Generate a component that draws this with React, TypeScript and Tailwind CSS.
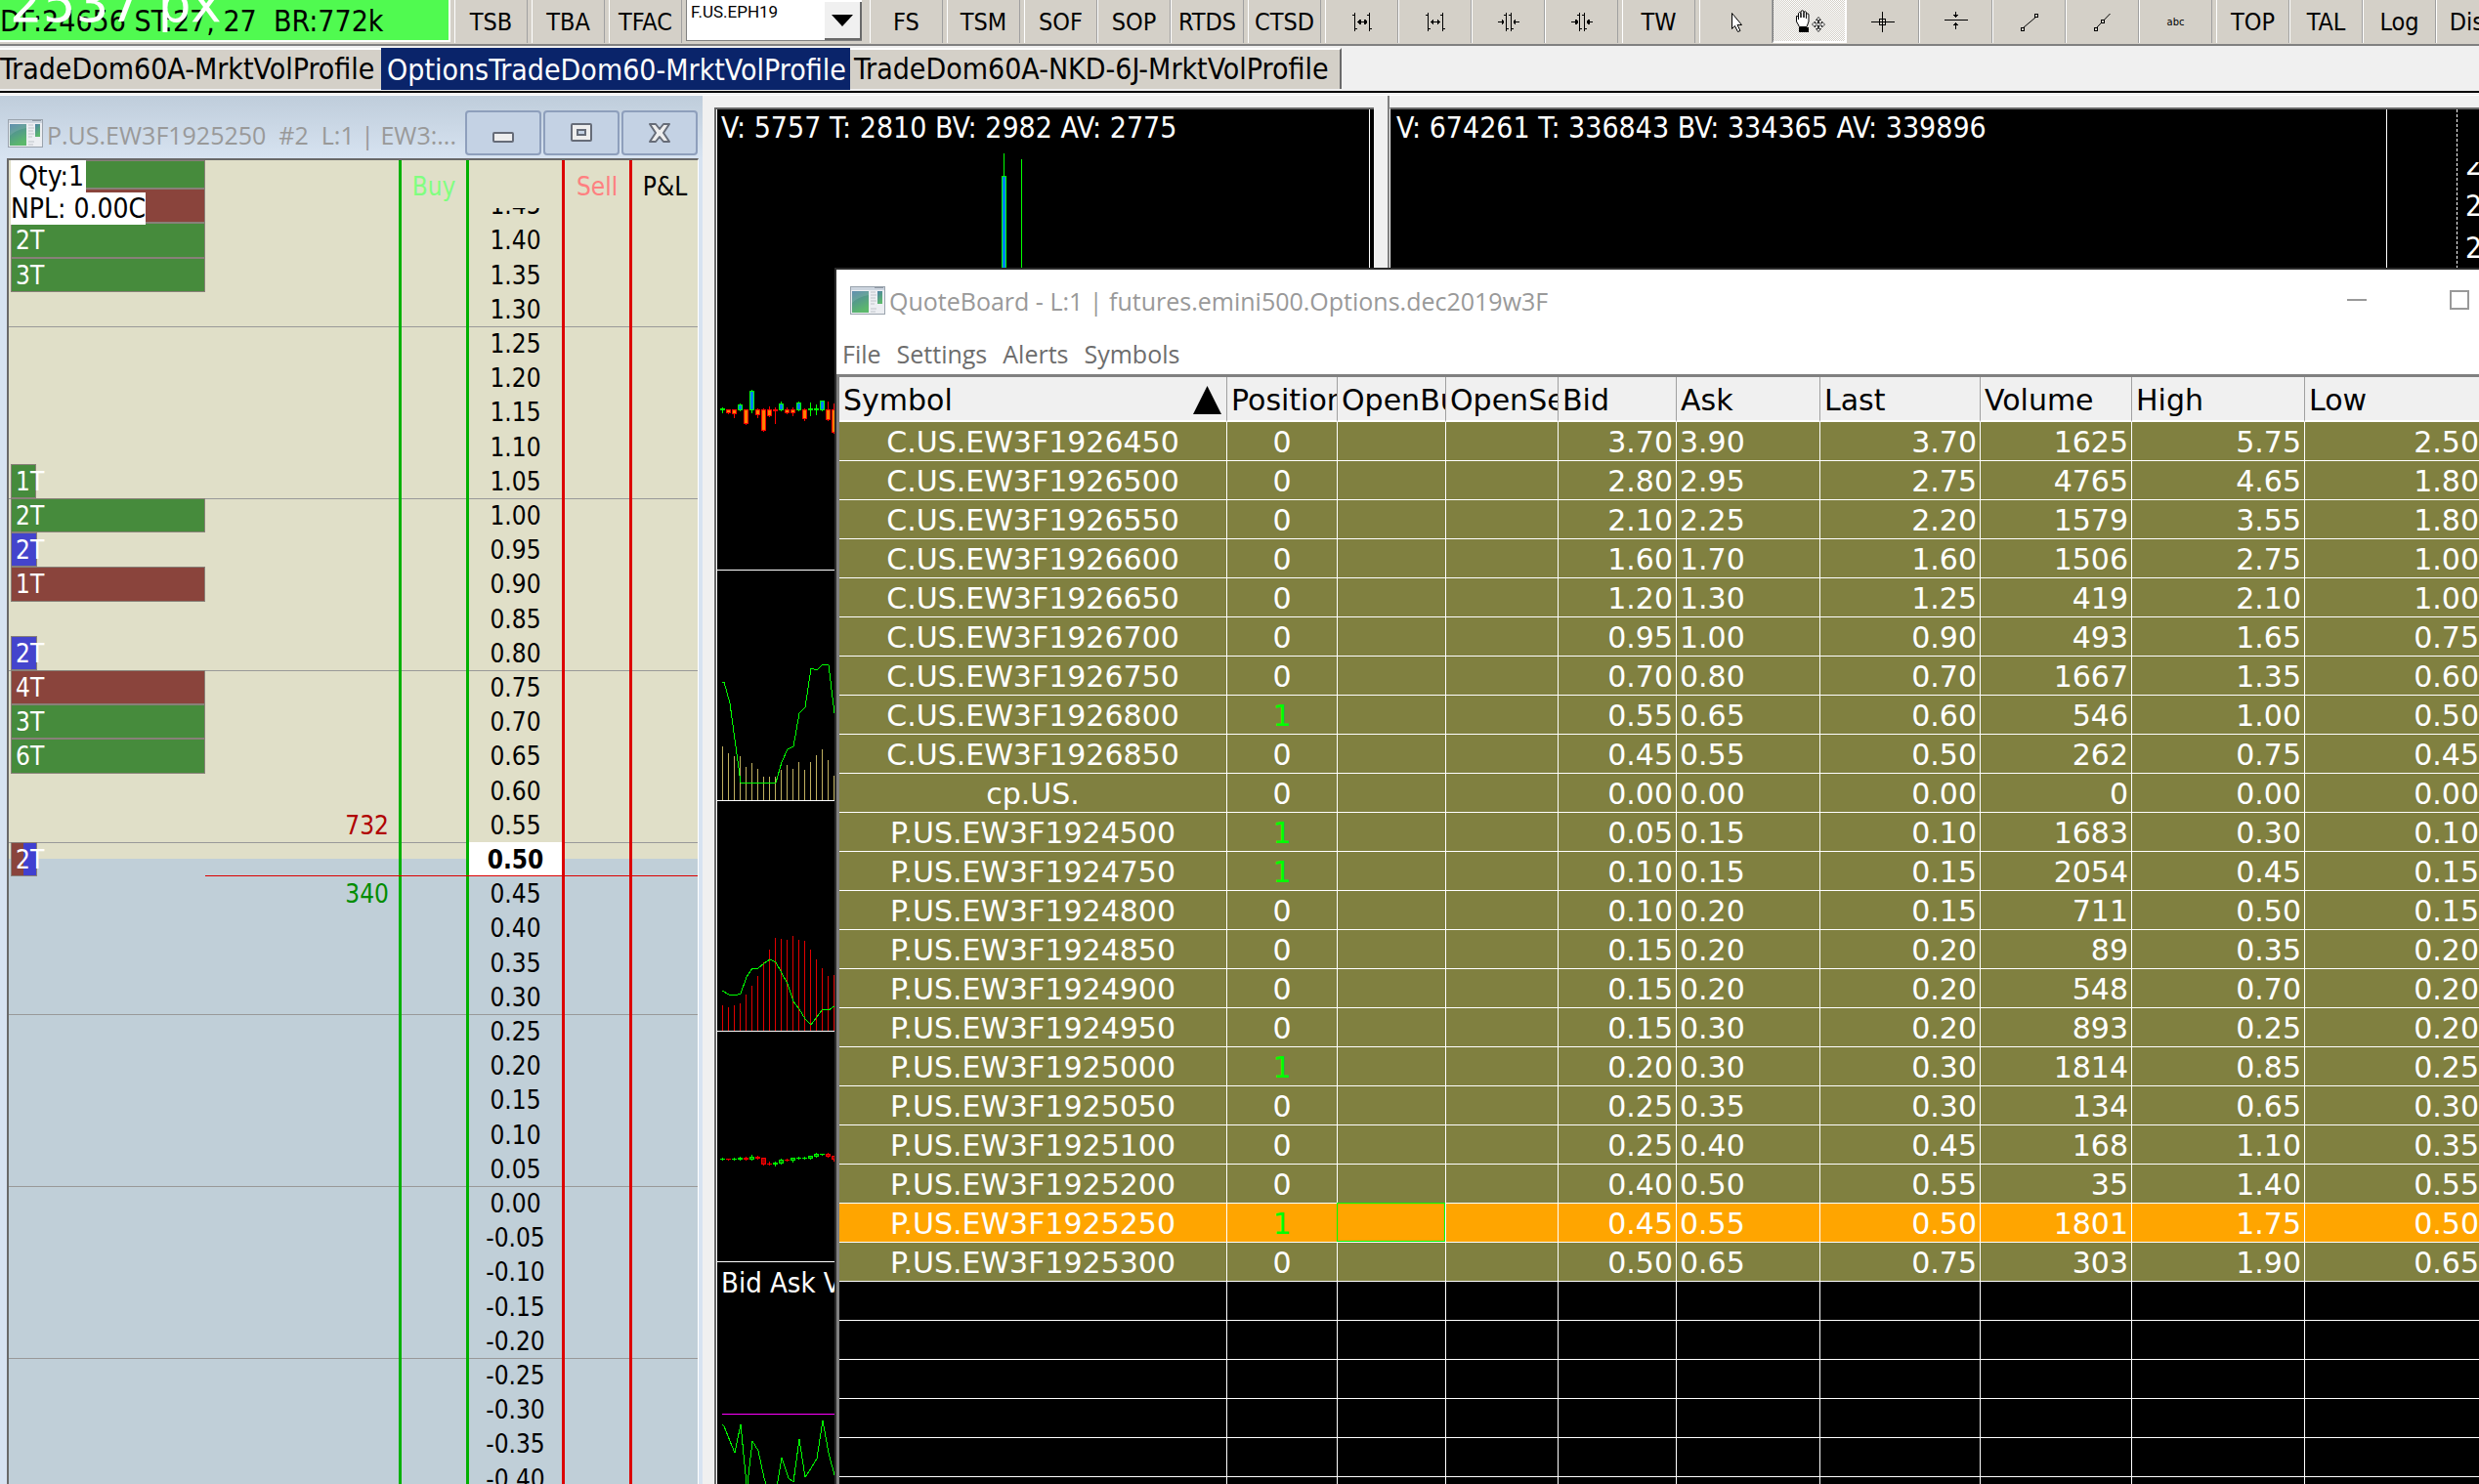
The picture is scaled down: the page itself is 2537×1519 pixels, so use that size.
import type { ReactNode } from "react";

type Candle = {
  kind: "up" | "down" | "doji";
  top: number;
  bottom: number;
  high: number;
  low: number;
};

const menuItems = ["File", "Settings", "Alerts", "Symbols"];

const quotes = [
  ["C.US.EW3F1926450", "0", "3.70", "3.90", "3.70", "1625", "5.75", "2.50"],
  ["C.US.EW3F1926500", "0", "2.80", "2.95", "2.75", "4765", "4.65", "1.80"],
  ["C.US.EW3F1926550", "0", "2.10", "2.25", "2.20", "1579", "3.55", "1.80"],
  ["C.US.EW3F1926600", "0", "1.60", "1.70", "1.60", "1506", "2.75", "1.00"],
  ["C.US.EW3F1926650", "0", "1.20", "1.30", "1.25", "419", "2.10", "1.00"],
  ["C.US.EW3F1926700", "0", "0.95", "1.00", "0.90", "493", "1.65", "0.75"],
  ["C.US.EW3F1926750", "0", "0.70", "0.80", "0.70", "1667", "1.35", "0.60"],
  ["C.US.EW3F1926800", "1", "0.55", "0.65", "0.60", "546", "1.00", "0.50"],
  ["C.US.EW3F1926850", "0", "0.45", "0.55", "0.50", "262", "0.75", "0.45"],
  ["cp.US.", "0", "0.00", "0.00", "0.00", "0", "0.00", "0.00"],
  ["P.US.EW3F1924500", "1", "0.05", "0.15", "0.10", "1683", "0.30", "0.10"],
  ["P.US.EW3F1924750", "1", "0.10", "0.15", "0.15", "2054", "0.45", "0.15"],
  ["P.US.EW3F1924800", "0", "0.10", "0.20", "0.15", "711", "0.50", "0.15"],
  ["P.US.EW3F1924850", "0", "0.15", "0.20", "0.20", "89", "0.35", "0.20"],
  ["P.US.EW3F1924900", "0", "0.15", "0.20", "0.20", "548", "0.70", "0.20"],
  ["P.US.EW3F1924950", "0", "0.15", "0.30", "0.20", "893", "0.25", "0.20"],
  ["P.US.EW3F1925000", "1", "0.20", "0.30", "0.30", "1814", "0.85", "0.25"],
  ["P.US.EW3F1925050", "0", "0.25", "0.35", "0.30", "134", "0.65", "0.30"],
  ["P.US.EW3F1925100", "0", "0.25", "0.40", "0.45", "168", "1.10", "0.35"],
  ["P.US.EW3F1925200", "0", "0.40", "0.50", "0.55", "35", "1.40", "0.55"],
  ["P.US.EW3F1925250", "1", "0.45", "0.55", "0.50", "1801", "1.75", "0.50"],
  ["P.US.EW3F1925300", "0", "0.50", "0.65", "0.75", "303", "1.90", "0.65"],
];

const selectedSymbol = "P.US.EW3F1925250";

const columns = [
  { title: "Symbol", width: "w-[397px]" },
  { title: "Position", width: "w-[113px]" },
  { title: "OpenBuy", width: "w-[111px]" },
  { title: "OpenSell", width: "w-[115px]" },
  { title: "Bid", width: "w-[121px]" },
  { title: "Ask", width: "w-[147px]" },
  { title: "Last", width: "w-[164px]" },
  { title: "Volume", width: "w-[155px]" },
  { title: "High", width: "w-[177px]" },
  { title: "Low", width: "" },
];

const ladderPrices = [
  "1.40", "1.35", "1.30", "1.25", "1.20", "1.15", "1.10", "1.05", "1.00",
  "0.95", "0.90", "0.85", "0.80", "0.75", "0.70", "0.65", "0.60", "0.55",
  "0.50", "0.45", "0.40", "0.35", "0.30", "0.25", "0.20", "0.15", "0.10",
  "0.05", "0.00", "-0.05", "-0.10", "-0.15", "-0.20", "-0.25", "-0.30",
  "-0.35", "-0.40",
];

const green = "bg-[#468b3c]";
const brown = "bg-[#8a443c]";
const blue = "bg-[#4444cc]";

const profile: Record<string, { label: string; style: string }> = {
  "1.40": { label: "2T", style: `${green} w-[199px]` },
  "1.35": { label: "3T", style: `${green} w-[199px]` },
  "1.05": { label: "1T", style: `${green} w-[26px]` },
  "1.00": { label: "2T", style: `${green} w-[199px]` },
  "0.95": { label: "2T", style: `${blue} w-[27px]` },
  "0.90": { label: "1T", style: `${brown} w-[199px]` },
  "0.80": { label: "2T", style: `${blue} w-[27px]` },
  "0.75": { label: "4T", style: `${brown} w-[199px]` },
  "0.70": { label: "3T", style: `${green} w-[199px]` },
  "0.65": { label: "6T", style: `${green} w-[199px]` },
  "0.50": {
    label: "2T",
    style: "bg-[linear-gradient(90deg,#8a443c_50%,#4040d0_50%)] w-[27px]",
  },
};

const depth: Record<string, { size: string; color: string }> = {
  "0.55": { size: "732", color: "text-[#b00000]" },
  "0.45": { size: "340", color: "text-[#008c00]" },
};

const c = (
  kind: Candle["kind"],
  top: number,
  bottom: number,
  high = top,
  low = bottom
): Candle => ({ kind, top, bottom, high, low });

const deltaCandles = [
  c("doji", 306, 308, 305, 310), c("down", 307, 311), c("down", 307, 312, 307, 315),
  c("up", 302, 308, 301), c("down", 307, 322), c("up", 288, 308, 287, 310),
  c("down", 307, 313, 306, 315), c("down", 307, 329, 306), c("down", 307, 314, 304),
  c("down", 307, 309, 305, 321), c("up", 301, 308, 299), c("down", 307, 311, 305),
  c("down", 307, 311, 305, 313), c("up", 300, 308, 299), c("down", 307, 317, 306, 318),
  c("doji", 306, 308, 300, 313), c("doji", 306, 308, 302, 312), c("up", 298, 308),
  c("down", 307, 318, 299), c("down", 307, 331, 301),
];

const priceCandles = [
  c("up", 130, 131, 129), c("down", 130, 131), c("up", 130, 131, 129),
  c("up", 129, 131, 128), c("down", 129, 131, 128), c("up", 128, 131, 126),
  c("down", 128, 130, 127), c("down", 129, 136), c("down", 135, 136, 133),
  c("up", 134, 136, 133, 137), c("up", 131, 135, 130), c("down", 131, 132, 130),
  c("up", 129, 132, 129, 133), c("up", 129, 130, 128), c("up", 129, 130, 128),
  c("up", 127, 130), c("up", 125, 128, 124), c("up", 125, 126),
  c("down", 125, 128, 124), c("down", 127, 131, 127, 132),
];

const volumeBars = [
  180, 187, 190, 190, 201, 197, 203, 211, 211, 211, 204, 199, 203, 196, 204,
  196, 189, 183, 194, 210,
];

const trendBars = [
  209, 211, 209, 207, 198, 189, 179, 165, 152, 140, 141, 142, 138, 142, 143,
  152, 162, 171, 179, 178,
];

/* Small app icon used in both title bars */
const WindowIcon = () => (
  <svg width="36" height="29" viewBox="0 0 36 29" className="shrink-0">
    <defs>
      <linearGradient id="pane" x1="0" y1="0" x2="0.4" y2="1">
        <stop offset="0" stopColor="#4c7fa5" />
        <stop offset="1" stopColor="#5cb86c" />
      </linearGradient>
    </defs>
    <rect x="0.5" y="0.5" width="35" height="28" fill="#eceef2" stroke="#9aa3ad" />
    <rect x="1" y="1" width="34" height="3" fill="#cdd5df" />
    <rect x="25" y="1" width="9" height="1" fill="#8f99a5" />
    <rect x="2" y="5" width="17" height="22" fill="url(#pane)" />
    <path d="M2 17Q8 11 19 9V5H2Z" fill="#fff" opacity="0.12" />
    <path d="M21 6h5M21 9h6M21 12h5M21 15h6M21 18h4M21 23h6M21 26h5" stroke="#c0c4ca" />
    <rect x="28" y="5" width="5" height="13" fill="url(#pane)" />
  </svg>
);

/* Toolbar */
const ToolButton = ({
  label,
  pressed = false,
  children,
}: {
  label: string;
  pressed?: boolean;
  children?: ReactNode;
}) => (
  <button
    aria-label={label}
    className={`flex h-11 w-[75px] shrink-0 items-center justify-center overflow-hidden whitespace-nowrap border-x text-[25px] leading-none ${
      pressed
        ? "border-b-2 border-b-white border-l-[#808080] border-r-white bg-[repeating-conic-gradient(#fff_0_25%,#d4d0c8_0_50%)] bg-[size:2px_2px]"
        : "border-l-white border-r-[#a0a0a0] bg-[#d4d0c8]"
    }`}
  >
    {children ?? label}
  </button>
);

const ToolIcon = ({ children }: { children: ReactNode }) => (
  <svg
    width="34"
    height="26"
    viewBox="0 0 34 26"
    fill="none"
    stroke="#000"
    shapeRendering="crispEdges"
    className="shrink-0"
  >
    {children}
  </svg>
);

const SpacingIcon = ({ bold = false }: { bold?: boolean }) => (
  <ToolIcon>
    <path d="M9.5 4v19M7 6.5h2M10 20.5h2M24.5 4v19M22 6.5h2M25 20.5h2" />
    <path d="M12 13.5h10" />
    <path d="M14.5 11v5M13.5 12v3M19.5 11v5M20.5 12v3" strokeWidth={bold ? 2 : 1} />
  </ToolIcon>
);

const SqueezeIcon = ({ bold = false }: { bold?: boolean }) => (
  <ToolIcon>
    <path d="M14.5 4v19M12 6.5h2M15 20.5h2M19.5 4v19M17 6.5h2M20 20.5h2" />
    <path d="M6 13.5h6M22 13.5h6" />
    <path d="M10.5 11v5M11.5 12v3M23.5 11v5M22.5 12v3" strokeWidth={bold ? 2 : 1} />
  </ToolIcon>
);

const ArrowIcon = () => (
  <ToolIcon>
    <path
      d="M12.5 4.5v16l3-3 3 6 2.5-1-3-6h4.5Z"
      fill="#fff"
      shapeRendering="auto"
    />
  </ToolIcon>
);

const HandIcon = () => (
  <ToolIcon>
    <path
      d="M6.5 19.5L3.5 14V8.500h2V12V5.500q1-2 2.500 0V10V3.500q1.500-1.500 3 0V10V4.500q1.500-1.500 2.500 0V11V6.500q1.500-1.500 2.500 0V14l-2 5.500Z"
      fill="#fff"
      shapeRendering="auto"
    />
    <rect x="6" y="20" width="10" height="5" fill="#000" stroke="none" />
    <path
      d="M26 9.500l2.500 3h-2v3.500h3v-2l3 3-3 3v-2h-3v3.500h2l-2.500 3-2.500-3h2v-3.500h-3v2l-3-3 3-3v2h3v-3.500h-2Z"
      fill="#fff"
      strokeWidth="0.8"
      shapeRendering="auto"
    />
  </ToolIcon>
);

const CrossIcon = () => (
  <ToolIcon>
    <path d="M5 13.5h24M16.5 3v21" />
    <rect x="13.5" y="10.5" width="6" height="6" />
  </ToolIcon>
);

const LevelIcon = () => (
  <ToolIcon>
    <path d="M5 11.5h24M16.5 3v6M14 6.5h5M15 7.5h3M16.5 14v7M14 16.5h5M15 15.5h3" />
  </ToolIcon>
);

const LineIcon = () => (
  <ToolIcon>
    <path d="M10.5 19.5L23.5 8.5" shapeRendering="auto" />
    <rect x="8.5" y="19.5" width="3" height="3" />
    <rect x="22.5" y="5.5" width="3" height="3" />
  </ToolIcon>
);

const RayIcon = () => (
  <ToolIcon>
    <path d="M10.5 19.5L24.5 5" shapeRendering="auto" />
    <rect x="8.5" y="19.5" width="3" height="3" />
    <rect x="15.5" y="11.5" width="3" height="3" fill="#d4d0c8" />
  </ToolIcon>
);

const Toolbar = () => (
  <header className="flex h-[47px] shrink-0 items-start gap-1 overflow-hidden border-b-2 border-[#808080] bg-[#d4d0c8]">
    <div className="relative h-[43px] w-[461px] shrink-0 overflow-hidden border-b-2 border-r-2 border-white bg-[#50fa50]">
      <p className="whitespace-pre pt-1 text-[30px] leading-[36px]">
        DF:24656 ST:27, 27{"  "}BR:772k
      </p>
      <span className="absolute -top-[26px] left-2.5 font-['DejaVu_Sans'] text-[53px] leading-[60px] text-white">
        2537 px
      </span>
    </div>
    <ToolButton label="TSB" />
    <ToolButton label="TBA" />
    <ToolButton label="TFAC" />
    <div className="relative h-[42px] w-[180px] shrink-0 border-b border-l border-[#808080] bg-white">
      <select
        aria-label="Symbol"
        className="h-[25px] w-full appearance-none pl-1 font-[Roboto] text-[17px] leading-none"
      >
        <option>F.US.EPH19</option>
      </select>
      <span className="pointer-events-none absolute right-0 top-0.5 flex h-[39px] w-[38px] items-center justify-center border-b-2 border-r-2 border-[#696969] bg-[#f0f0f0]">
        <svg width="22" height="12" viewBox="0 0 22 12">
          <path d="M0 0h22L11 12Z" />
        </svg>
      </span>
    </div>
    <div className="flex pl-1">
      <ToolButton label="FS" />
    </div>
    <ToolButton label="TSM" />
    <div className="flex">
      <ToolButton label="SOF" />
      <ToolButton label="SOP" />
      <ToolButton label="RTDS" />
    </div>
    <ToolButton label="CTSD" />
    <div className="flex">
      <ToolButton label="Widen bars fast"><SpacingIcon bold /></ToolButton>
      <ToolButton label="Widen bars"><SpacingIcon /></ToolButton>
      <ToolButton label="Narrow bars"><SqueezeIcon /></ToolButton>
      <ToolButton label="Narrow bars fast"><SqueezeIcon bold /></ToolButton>
    </div>
    <ToolButton label="TW" />
    <div className="flex">
      <ToolButton label="Pointer"><ArrowIcon /></ToolButton>
      <ToolButton label="Hand" pressed><HandIcon /></ToolButton>
      <ToolButton label="Crosshair"><CrossIcon /></ToolButton>
      <ToolButton label="Level"><LevelIcon /></ToolButton>
      <ToolButton label="Line"><LineIcon /></ToolButton>
      <ToolButton label="Ray"><RayIcon /></ToolButton>
      <ToolButton label="Text"><span className="text-[11px]">abc</span></ToolButton>
    </div>
    <div className="flex">
      <ToolButton label="TOP" />
      <ToolButton label="TAL" />
      <ToolButton label="Log" />
      <ToolButton label="Disc" />
    </div>
  </header>
);

const ChartbookTabs = () => (
  <nav className="flex h-[51px] shrink-0 items-start border-b border-white bg-[#f0f0f0]">
    <div className="flex h-12 w-full items-start border-b-2 border-black pt-0.5 text-[30px] leading-[36px]">
      <button className="h-[42px] w-[390px] overflow-hidden whitespace-nowrap border-t-2 border-white bg-[#d4d0c8] text-left">
        TradeDom60A-MrktVolProfile
      </button>
      <button className="h-[43px] w-[480px] overflow-hidden whitespace-nowrap bg-[#0a246a] pl-1.5 pt-0.5 text-left text-white">
        OptionsTradeDom60-MrktVolProfile
      </button>
      <button className="h-[42px] w-[503px] overflow-hidden whitespace-nowrap border-r-2 border-t-2 border-r-[#696969] border-t-white bg-[#d4d0c8] pl-1 text-left">
        TradeDom60A-NKD-6J-MrktVolProfile
      </button>
    </div>
  </nav>
);

/* Trade DOM */
const LadderCells = ({
  left,
  price,
  current = false,
}: {
  left?: ReactNode;
  price?: ReactNode;
  current?: boolean;
}) => (
  <>
    <div className="flex w-[402px] shrink-0 border-r-3 border-[#00b000] pl-0.5">{left}</div>
    <div className="w-[69px] shrink-0 border-r-3 border-[#00b000]" />
    <div
      className={`flex w-[98px] shrink-0 items-center justify-center border-r-3 border-[#dc0000] ${
        current ? "bg-white font-bold" : ""
      }`}
    >
      {price}
    </div>
    <div className="w-[69px] shrink-0 border-r-3 border-[#dc0000]" />
    <div className="flex-1" />
  </>
);

const LadderRow = ({ price, index }: { price: string; index: number }) => {
  const bar = profile[price];
  const size = depth[price];
  const current = price === "0.50";

  let background = "bg-[#e0dfc8]";
  if (current) background = "bg-[linear-gradient(#e0dfc8_17px,#c0cfd8_17px)]";
  if (index > 18) background = "bg-[#c0cfd8]";

  return (
    <div
      className={`relative flex shrink-0 ${index % 5 === 0 ? "h-9" : "h-[35px]"} ${background} ${
        index % 5 === 3 ? "shadow-[inset_0_1px_#999]" : ""
      }`}
    >
      <LadderCells
        current={current}
        price={price}
        left={
          <>
            {bar && (
              <div
                className={`flex items-center whitespace-nowrap border border-[#888078] pl-1 text-white ${bar.style}`}
              >
                {bar.label}
              </div>
            )}
            {size && (
              <span className={`ml-auto self-center pr-2.5 ${size.color}`}>{size.size}</span>
            )}
          </>
        }
      />
      {current && <div className="absolute bottom-0 left-[201px] right-0 h-px bg-[#dc0000]" />}
    </div>
  );
};

const CaptionButton = ({ label, children }: { label: string; children: ReactNode }) => (
  <button
    aria-label={label}
    className="flex h-[46px] w-[78px] items-center justify-center rounded-sm border-2 border-[#8e9fbc] bg-[#c4d2e4]"
  >
    {children}
  </button>
);

const DomWindow = () => (
  <section className="flex w-[719px] shrink-0 flex-col overflow-hidden bg-[#d7e3f1]">
    <div className="flex h-16 shrink-0 items-start bg-linear-to-b from-[#bfcddb] to-[#d7e3f1] pl-2 pr-[5px] pt-[15px]">
      <div className="flex h-[46px] flex-1 items-center gap-1">
        <WindowIcon />
        <h1 className="whitespace-pre pt-1.5 font-['Open_Sans'] text-[25px] text-[#999]">
          P.US.EW3F1925250{"  "}#2{"  "}L:1 | EW3:...
        </h1>
      </div>
      <div className="flex gap-0.5">
        <CaptionButton label="Minimize">
          <svg width="22" height="22" viewBox="0 0 22 22">
            <rect x="1" y="11" width="20" height="9" rx="1" fill="#eee" stroke="#666c78" strokeWidth="2" />
          </svg>
        </CaptionButton>
        <CaptionButton label="Maximize">
          <svg width="22" height="20" viewBox="0 0 22 20">
            <rect x="1" y="1" width="20" height="17" rx="1" fill="#eee" stroke="#666c78" strokeWidth="2" />
            <rect x="7" y="7" width="8" height="5" fill="#c4d2e4" stroke="#666c78" strokeWidth="2" />
          </svg>
        </CaptionButton>
        <CaptionButton label="Close">
          <svg width="22" height="20" viewBox="0 0 22 20">
            <path
              d="M1 1h6l4 5 4-5h6l-6 9 6 9h-6l-4-5-4 5H1l6-9Z"
              fill="#eee"
              stroke="#666c78"
              strokeWidth="2"
              strokeLinejoin="round"
            />
          </svg>
        </CaptionButton>
      </div>
    </div>

    <div className="relative ml-[7px] mr-1 flex flex-1 flex-col overflow-hidden border-l-2 border-r-1 border-t-2 border-l-[#696969] border-r-white border-t-[#696969] text-[26px] leading-none">
      {/* Column titles */}
      <div className="flex h-[49px] shrink-0 bg-[#e0dfc8]">
        <div className="w-[402px] shrink-0 border-r-3 border-[#00b000] pl-0.5">
          <div className="h-[29px] w-[199px] border border-[#888078] bg-[#468b3c]" />
          <div className="h-5 w-[199px] border border-b-0 border-[#888078] bg-[#8a443c]" />
        </div>
        <div className="flex w-[69px] shrink-0 items-center justify-center border-r-3 border-[#00b000] pt-1 text-[#80ff80]">
          Buy
        </div>
        <div className="w-[98px] shrink-0 border-r-3 border-[#dc0000]" />
        <div className="flex w-[69px] shrink-0 items-center justify-center border-r-3 border-[#dc0000] pt-1 text-[#ff8080]">
          Sell
        </div>
        <div className="flex flex-1 items-center justify-center pt-1">P&amp;L</div>
      </div>

      {/* First price is half hidden by the titles */}
      <div className="flex h-[15px] shrink-0 overflow-hidden bg-[#e0dfc8]">
        <LadderCells
          left={<div className="w-[199px] border border-t-0 border-[#888078] bg-[#8a443c]" />}
          price={
            <span className="h-[15px] overflow-hidden">
              <span className="-mt-5 block leading-[35px]">1.45</span>
            </span>
          }
        />
      </div>

      {ladderPrices.map((price, index) => (
        <LadderRow key={price} price={price} index={index} />
      ))}

      <div className="absolute left-0.5 top-0 flex flex-col items-start whitespace-nowrap text-[28px] leading-[33px]">
        <span className="bg-white pl-2 pr-0.5">Qty:1</span>
        <span className="bg-white">NPL: 0.00C</span>
      </div>
    </div>
  </section>
);

/* Charts */
const Candles = ({
  data,
  upFill,
  downFill,
}: {
  data: Candle[];
  upFill: string;
  downFill: string;
}) => (
  <>
    {data.map(({ kind, top, bottom, high, low }, i) => {
      const x = i * 6 + 5;
      const stroke = kind === "down" ? "#ff0000" : "#00ff00";
      let fill = kind === "down" ? downFill : upFill;
      if (kind === "doji") fill = stroke;
      return (
        <g key={i} shapeRendering="crispEdges">
          <rect x={x} y={high} width="1" height={low - high + 1} fill={stroke} />
          <rect x={x - 2} y={top} width="5" height={bottom - top} fill={stroke} />
          {bottom - top > 2 && (
            <rect x={x - 1} y={top + 1} width="3" height={bottom - top - 2} fill={fill} />
          )}
        </g>
      );
    })}
  </>
);

const Bars = ({ data, color }: { data: number[]; color: string }) => (
  <>
    {data.map((top, i) => (
      <rect key={i} x={i * 6 + 5} y={top} width="1" height={235 - top} fill={color} />
    ))}
  </>
);

const Curve = ({ points }: { points: string }) => (
  <polyline points={points} fill="none" stroke="#00ff00" shapeRendering="crispEdges" />
);

const VolumeChart = () => (
  <section className="flex w-[701px] shrink-0 flex-col pl-3 pr-3.5 pt-3">
    <div className="flex flex-1 flex-col overflow-hidden border-l-2 border-t-2 border-l-[#696969] border-t-[#696969] bg-black pr-1">
      <div className="flex flex-1 flex-col border-l border-r border-white">
        <div className="relative h-[472px] shrink-0 border-b border-white">
          <p className="absolute left-1 top-0 whitespace-nowrap text-[30px] leading-[38px] text-white">
            V: 5757 T: 2810 BV: 2982 AV: 2775
          </p>
          <svg width="666" height="471" className="block">
            <Candles data={deltaCandles} upFill="#0080ff" downFill="#ff8000" />
            <path d="M293.5 45v23M311.5 51v140" stroke="#00ff00" />
            <rect x="291.5" y="68.5" width="4" height="120" fill="#0080ff" stroke="#00ff00" />
          </svg>
        </div>
        <div className="h-[236px] shrink-0 border-b border-white">
          <svg width="666" height="235" className="block">
            <Bars data={volumeBars} color="#c0b060" />
            <Curve points="5,114 7,114 13,136 18,173 24,217 60,217 66,196 72,183 78,180 84,146 90,140 96,100 102,102 108,96 114,97 120,146 124,147" />
          </svg>
        </div>
        <div className="h-[236px] shrink-0 border-b border-white">
          <svg width="666" height="235" className="block">
            <Bars data={trendBars} color="#e00000" />
            <Curve points="5,194 12,198 18,199 24,197 30,180 36,171 42,171 48,166 54,162 60,165 66,176 72,187 78,205 84,213 90,223 96,229 102,221 108,213 114,214 124,207" />
          </svg>
        </div>
        <div className="h-[236px] shrink-0 border-b border-white">
          <svg width="666" height="235" className="block">
            <Candles data={priceCandles} upFill="#008000" downFill="#a00000" />
          </svg>
        </div>
        <div className="relative flex-1">
          <p className="absolute left-1 top-0.5 whitespace-nowrap text-[29px] leading-[38px] text-white">
            Bid Ask Vol
          </p>
          <svg width="666" height="235" className="block">
            <rect x="5" y="155" width="400" height="1" fill="#ff00ff" />
            <Curve points="5,166 7,168 13,183 18,195 24,166 30,227 31,227 36,183 42,193 48,221 51,230 61,230 66,200 73,221 78,225 84,181 90,220 96,211 102,201 108,162 114,195 120,218 124,205" />
          </svg>
        </div>
      </div>
    </div>
  </section>
);

const FuturesChart = () => (
  <section className="flex min-w-0 flex-1 flex-col border-l-2 border-[#808080] pt-3">
    <div className="flex flex-1 overflow-hidden border-l border-t-2 border-l-white border-t-[#696969] bg-black text-[30px] leading-[38px] text-white">
      <p className="flex-1 whitespace-nowrap border-r border-white pl-1.5">
        V: 674261 T: 336843 BV: 334365 AV: 339896
      </p>
      <div className="w-[72px] shrink-0 border-r border-dashed border-white" />
      <div className="flex w-[22px] shrink-0 flex-col gap-[5px] overflow-hidden pl-2 pt-[54px]">
        <span className="h-[21px] overflow-hidden">
          <span className="-mt-4 block">2</span>
        </span>
        <span>2</span>
        <span>2</span>
      </div>
    </div>
  </section>
);

/* Quote board */
const QuoteTable = () => (
  <table className="w-full table-fixed border-separate border-spacing-0 font-['DejaVu_Sans'] text-[30px] leading-[37px] text-white">
    <thead className="text-black">
      <tr>
        {columns.map(({ title, width }) => (
          <th
            key={title}
            className={`h-[46px] overflow-hidden whitespace-nowrap border-b-2 border-r border-b-white border-r-[#a0a0a0] bg-[#f0f0f0] p-0 pl-1 pt-0.5 text-left font-normal last:border-r-0 ${width}`}
          >
            {title === "Symbol" ? (
              <span className="flex items-center justify-between pr-[5px]">
                Symbol
                <svg width="29" height="29" viewBox="0 0 29 29">
                  <path d="M14.5 0L29 29H0Z" />
                </svg>
              </span>
            ) : (
              title
            )}
          </th>
        ))}
      </tr>
    </thead>
    <tbody>
      {quotes.map(([symbol, position, bid, ask, last, volume, high, low]) => {
        const selected = symbol === selectedSymbol;
        const cell = "h-10 border-b border-r border-white p-0 pt-0.5";
        return (
          <tr key={symbol} className={selected ? "bg-[#ffa500]" : "bg-[#808040]"}>
            <td className={`${cell} text-center`}>{symbol}</td>
            <td className={`${cell} text-center ${position === "1" ? "text-[#00ff00]" : ""}`}>
              {position}
            </td>
            <td className={`${cell} relative`}>
              {selected && (
                <div className="absolute -left-px -top-px bottom-0 right-0 border border-[#00ff00]" />
              )}
            </td>
            <td className={cell} />
            <td className={`${cell} pr-[3px] text-right`}>{bid}</td>
            <td className={`${cell} pl-[3px]`}>{ask}</td>
            <td className={`${cell} pr-[3px] text-right`}>{last}</td>
            <td className={`${cell} pr-[3px] text-right`}>{volume}</td>
            <td className={`${cell} pr-[3px] text-right`}>{high}</td>
            <td className="h-10 border-b border-white p-0 pt-0.5 text-right">{low}</td>
          </tr>
        );
      })}
      {[0, 1, 2, 3, 4, 5].map((row) => (
        <tr key={row} className="bg-black">
          {columns.map(({ title }) => (
            <td key={title} className="h-10 border-b border-r border-white p-0 last:border-r-0" />
          ))}
        </tr>
      ))}
    </tbody>
  </table>
);

const QuoteBoard = () => (
  <section className="absolute bottom-0 left-[854px] right-0 top-44 flex flex-col overflow-hidden border-l-2 border-t-2 border-[#2b2b2b] bg-white">
    <div className="flex h-[62px] shrink-0 items-center gap-1 pl-3.5 font-['Open_Sans'] text-[#999]">
      <WindowIcon />
      <h2 className="flex-1 whitespace-nowrap pt-1 text-[25px]">
        QuoteBoard - L:1 | futures.emini500.Options.dec2019w3F
      </h2>
      <button aria-label="Minimize" className="mr-[81px] h-5 w-5">
        <span className="block h-0.5 bg-[#999]" />
      </button>
      <button aria-label="Maximize" className="mr-2.5 h-5 w-5 border-2 border-[#999]" />
    </div>
    <div className="flex h-[45px] shrink-0 items-center gap-4 pl-1.5 pt-1 font-['Open_Sans'] text-[25px] text-[#6d6d6d]">
      {menuItems.map((item) => (
        <button key={item}>{item}</button>
      ))}
    </div>
    <div className="flex-1 overflow-hidden border-l-3 border-t-3 border-[#808080]">
      <QuoteTable />
    </div>
  </section>
);

const App = () => {
  return (
    <div className="flex h-screen flex-col overflow-hidden bg-[#f0f0f0] font-['DejaVu_Sans_Condensed','Noto_Sans',sans-serif] text-black">
      <Toolbar />
      <ChartbookTabs />
      <main className="relative flex min-h-0 flex-1">
        <DomWindow />
        <VolumeChart />
        <FuturesChart />
        <QuoteBoard />
      </main>
    </div>
  );
};

export default App;
